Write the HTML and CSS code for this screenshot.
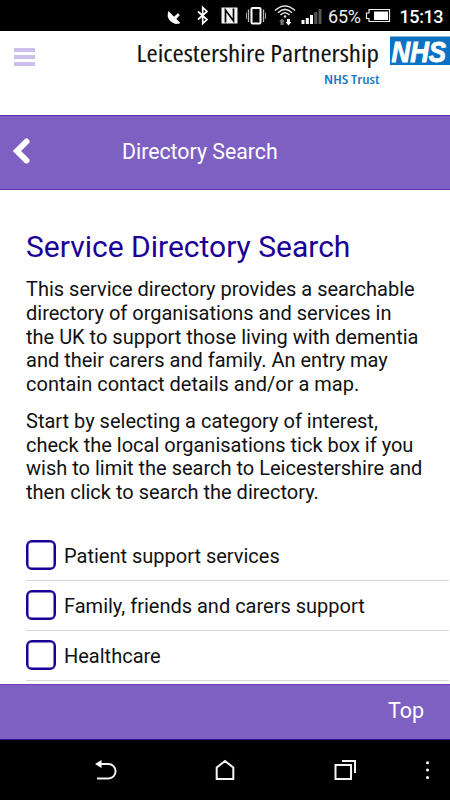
FILE: index.html
```html
<!DOCTYPE html>
<html lang="en">
<head>
<meta charset="utf-8">
<title>Directory Search</title>
<link rel="stylesheet" href="styles.css">
</head>
<body>
<div class="screen">
  <div class="status">
    <svg width="158" height="31" viewBox="166 0 158 31">
      <path d="M168.500 11.500 Q166.500 17 170.500 21 Q174.500 25 180 23 L176 19 L179.500 15 L178 13.500 L174 17Z" fill="#fff" stroke="#fff" stroke-width=".6"/>
      <path d="M198 11.500 L207 19.500 L202.700 23.500 V7.500 L207 11.500 L198 19.500" fill="none" stroke="#fff" stroke-width="1.700"/>
      <rect x="221.500" y="7.500" width="16" height="16" fill="#f4f4f4"/>
      <path d="M225.500 22.500V10L233.500 21V8.500" fill="none" stroke="#000" stroke-width="1.700"/>
      <rect x="251.500" y="8" width="9" height="15.500" rx="1" fill="none" stroke="#fff" stroke-width="2"/>
      <path d="M248.500 9.500V22M263.500 9.500V22" stroke="#bbb" stroke-width="1.300"/>
      <path d="M246.500 12.500V19M265.500 12.500V19" stroke="#999"/>
      <g fill="none" stroke="#ddd" stroke-width="1.600"><path d="M275 10.500Q285 1.500 295 10.500"/><path d="M278 12.800Q285 6 292 12.800"/><path d="M280.500 15Q285 10.500 289.500 15"/></g>
      <circle cx="285" cy="16.500" r="1.300" fill="#ddd"/>
      <path d="M279 21.500L282 18.500L285 21.500H283.500V25H280.500V21.500Z" fill="#777"/>
      <path d="M285.500 22L288.500 25.500L291.500 22H290V19H287V22Z" fill="#fff"/>
      <path d="M301.500 20h3v4h-3zM305.800 18h3v6h-3zM310 15h3v9h-3z" fill="#fff"/>
      <path d="M314.300 12h3v12h-3zM318.500 9h3v15h-3z" fill="#555"/>
    </svg>
    <svg width="126" height="31" viewBox="324 0 126 31">
      <text class="pct" x="328" y="23" textLength="33">65%</text>
      <path d="M369 9.500H389.500V21.500H369V18.500H366.500V13H369Z" fill="none" stroke="#eee" stroke-width="1.200"/>
      <rect x="374" y="11.500" width="14" height="8.500" fill="#fff"/>
      <text class="clock" x="399.500" y="23" textLength="44">15:13</text>
    </svg>
  </div>
  <header class="brand">
    <div class="menu"><i></i><i></i><i></i></div>
    <svg class="logo" width="320" height="60" viewBox="130 31 320 60">
      <text class="trust" x="136.500" y="62" textLength="242.500" lengthAdjust="spacingAndGlyphs">Leicestershire Partnership</text>
      <text class="sub" x="324" y="83.500" textLength="55.500" lengthAdjust="spacingAndGlyphs">NHS Trust</text>
      <rect x="390" y="36.500" width="60" height="28.500" fill="#0b72c4"/>
      <text class="nhs" transform="translate(391.500 61.500) scale(.86 1)">NHS</text>
    </svg>
  </header>
  <nav class="bar">
    <svg class="back" width="20" height="30" viewBox="0 0 20 30"><path d="M15.500 5.500L6 15L15.500 24.500" fill="none" stroke="#fff" stroke-width="6" stroke-linejoin="miter" stroke-linecap="round"/></svg>
    <span class="title">Directory Search</span>
  </nav>
  <main>
    <h1>Service Directory Search</h1>
    <p>This service directory provides a searchable<br>directory of organisations and services in<br>the UK to support those living with dementia<br>and their carers and family. An entry may<br>contain contact details and/or a map.</p>
    <p>Start by selecting a category of interest,<br>check the local organisations tick box if you<br>wish to limit the search to Leicestershire and<br>then click to search the directory.</p>
    <div class="list">
      <div class="row"><span class="box"></span><span class="label">Patient support services</span></div>
      <div class="row"><span class="box"></span><span class="label">Family, friends and carers support</span></div>
      <div class="row"><span class="box"></span><span class="label">Healthcare</span></div>
    </div>
  </main>
  <footer class="foot"><span>Top</span></footer>
  <div class="keys">
    <svg width="450" height="60" viewBox="0 740 450 60" fill="none" stroke="#f4f4f4" stroke-width="2">
      <path d="M97 778.500H108.500A7 7.200 0 0 0 108.500 764H101"/>
      <path d="M95 764L101.500 760V768Z" fill="#fff" stroke="none"/>
      <path d="M216.700 779V767.500L225 761L233.300 767.500V779Z"/>
      <path d="M335.500 765H351V779H335.500ZM342 761H355V773"/>
      <g fill="#fff" stroke="none"><circle cx="427.500" cy="762.700" r="1.500"/><circle cx="427.500" cy="770" r="1.500"/><circle cx="427.500" cy="777.400" r="1.500"/></g>
    </svg>
  </div>
</div>
</body>
</html>
```
FILE: styles.css
```css
* { box-sizing: border-box; }
body { margin: 0; background: #fff; font-family: Roboto, sans-serif; color: #111; }
svg { display: block; flex: none; }
.screen { width: 450px; height: 800px; display: flex; flex-direction: column; overflow: hidden; }
.status { height: 31px; flex: none; background: #000; display: flex; justify-content: flex-end; }
.pct { font-size: 18px; fill: #eee; }
.clock { font-size: 18px; font-weight: 500; fill: #fff; }
.brand { height: 84px; flex: none; display: flex; justify-content: space-between; }
.menu { padding: 17px 0 0 14px; display: flex; flex-direction: column; gap: 3px; }
.menu i { width: 21px; height: 4px; background: #cbc0ec; }
.trust { font: 500 24px "Open Sans", sans-serif; font-stretch: 85%; fill: #111; stroke: #111; stroke-width: 0.1px; }
.sub { font: 600 13px "Open Sans", sans-serif; font-stretch: 85%; fill: #1979c4; }
.nhs { font: italic bold 30px "Liberation Sans", sans-serif; fill: #fff; stroke: #fff; stroke-width: 1px; }
.bar { height: 75px; flex: none; background: #7e5fc2; border: 1px solid #5f30b0; border-width: 1px 0; display: flex; align-items: center; color: #fff; }
.back { margin: -4px 0 0 11px; }
.title { margin: -3px 0 0 91px; font-size: 21.300px; white-space: nowrap; }
main { flex: 1; min-height: 0; overflow: hidden; padding: 38px 0 0 26px; }
h1 { margin: 0 0 12px; font-size: 30px; font-weight: 400; line-height: 38px; color: #1a0096; white-space: nowrap; }
p { margin: 0 0 13px; font-size: 20px; line-height: 23.750px; white-space: nowrap; }
.list { margin-top: 26px; margin-right: 1px; }
.row { height: 50px; display: flex; align-items: center; border-bottom: 1px solid #d8d8d8; font-size: 20px; white-space: nowrap; }
.label { padding-top: 1px; }
.box { width: 30px; height: 30px; flex: none; margin-right: 8px; border: 2px solid #1a0096; border-radius: 6px; box-shadow: inset 0 0 0 0.500px #1a0096; }
.foot { height: 56px; flex: none; background: #7e5fc2; border-top: 1px solid #6b40b8; border-bottom: 1px solid #32108e; display: flex; align-items: center; justify-content: flex-end; padding: 0 26px 4px 0; color: #fff; font-size: 21.500px; }
.keys { height: 60px; flex: none; background: #000; }
```
